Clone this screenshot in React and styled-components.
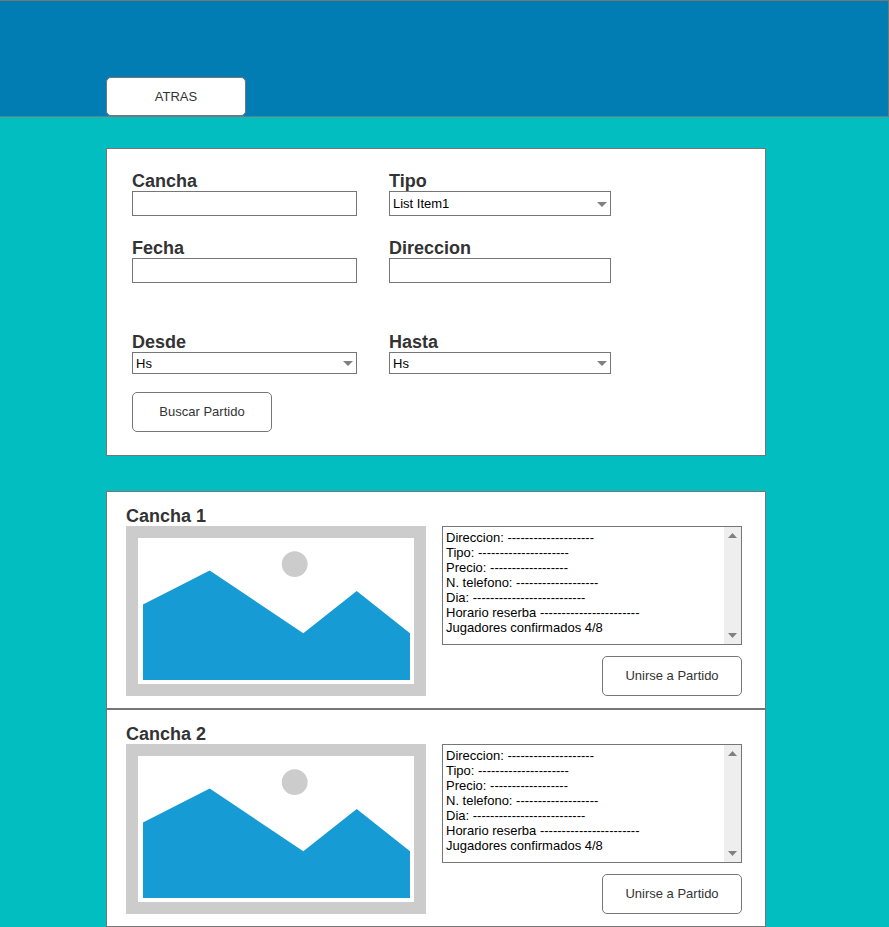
import React from "react";
import styled, { createGlobalStyle } from "styled-components";

const line = "#767678";
const ink = "#333333";

const GlobalStyle = createGlobalStyle`
  *, *::before, *::after { box-sizing: border-box; }
  body {
    margin: 0;
    background: #02bec0;
    color: ${ink};
    font-family: "Liberation Sans", Arial, sans-serif;
    font-size: 13px;
    line-height: 15px;
  }
  button, input, select, textarea { font: inherit; }
`;

const Header = styled.header`
  display: flex;
  align-items: flex-end;
  min-height: 117px;
  padding: 76px 122px 0 106px;
  background: #027db4;
  border: 1px solid ${line};
  border-left: 0;
`;

const Button = styled.button`
  width: 140px;
  height: 40px;
  padding: 0 0 2px;
  color: ${ink};
  background: #ffffff;
  border: 1px solid ${line};
  border-radius: 5px;
  cursor: pointer;
`;

const BackButton = styled(Button)`
  height: 39px;
  padding: 0;
`;

const Main = styled.main`
  display: flex;
  flex-direction: column;
  gap: 35px;
  padding: 31px 123px 0 106px;
`;

const SearchPanel = styled.form`
  padding: 23px 25px;
  background: #ffffff;
  border: 1px solid ${line};
`;

const FieldRow = styled.div`
  display: grid;
  grid-template-columns: minmax(0, 225px) minmax(0, 222px);
  column-gap: 32px;
  margin-bottom: ${(p) => p.$space}px;
`;

const Field = styled.div`
  display: flex;
  flex-direction: column;
`;

const Label = styled.label`
  font-size: 18px;
  font-weight: 700;
  line-height: 19px;
`;

const TextInput = styled.input`
  width: 100%;
  height: 25px;
  padding: 0 3px;
  color: #000000;
  background: #ffffff;
  border: 1px solid ${line};
  border-radius: 0;
`;

const SelectBox = styled.div`
  position: relative;
  height: ${(p) => p.$height}px;
`;

const Select = styled.select`
  appearance: none;
  display: block;
  width: 100%;
  height: 100%;
  padding: 0 20px 0 3px;
  color: #000000;
  background: #ffffff;
  border: 1px solid ${line};
  border-radius: 0;
`;

const SelectArrow = styled.svg`
  position: absolute;
  top: 50%;
  right: 4px;
  margin-top: -2px;
  pointer-events: none;
`;

const Results = styled.section`
  display: flex;
  flex-direction: column;
`;

const Card = styled.article`
  padding: 15px 23px 12px 19px;
  background: #ffffff;
  border: 1px solid ${line};
`;

const CardTitle = styled.h2`
  margin: 0;
  font-size: 18px;
  line-height: 19px;
`;

const CardBody = styled.div`
  display: grid;
  grid-template-columns: minmax(0, 300px) minmax(0, 300px);
  justify-content: space-between;
  column-gap: 16px;
  align-items: start;
`;

const Picture = styled.svg`
  display: block;
  width: 100%;
  height: auto;
`;

const Side = styled.div`
  display: flex;
  flex-direction: column;
  align-items: flex-end;
  gap: 11px;
`;

const DetailsBox = styled.div`
  display: flex;
  width: 100%;
  height: 119px;
  border: 1px solid ${line};
`;

const Details = styled.textarea`
  flex: 1;
  min-width: 0;
  padding: 3px;
  color: #000000;
  background: #ffffff;
  border: 0;
  resize: none;
  overflow: hidden;
  line-height: 15px;
`;

const ScrollTrack = styled.div`
  display: flex;
  flex-direction: column;
  justify-content: space-between;
  width: 17px;
  background: #eeeeee;
`;

const ScrollButton = styled.button`
  display: flex;
  align-items: center;
  justify-content: center;
  width: 17px;
  height: 17px;
  padding: 0;
  background: transparent;
  border: 0;
`;

const Down = () => (
  <svg width="9" height="5" viewBox="0 0 9 5" aria-hidden="true">
    <path d="M0 0H9L4.5 5Z" fill="#808080" />
  </svg>
);

const Up = () => (
  <svg width="9" height="5" viewBox="0 0 9 5" aria-hidden="true">
    <path d="M0 5H9L4.5 0Z" fill="#808080" />
  </svg>
);

function TextField({ id, label }) {
  return (
    <Field>
      <Label htmlFor={id}>{label}</Label>
      <TextInput id={id} type="text" />
    </Field>
  );
}

function SelectField({ id, label, option, height }) {
  return (
    <Field>
      <Label htmlFor={id}>{label}</Label>
      <SelectBox $height={height}>
        <Select id={id}>
          <option>{option}</option>
        </Select>
        <SelectArrow width="10" height="5" viewBox="0 0 10 5" aria-hidden="true">
          <path d="M0 0H10L5 5Z" fill="#808080" />
        </SelectArrow>
      </SelectBox>
    </Field>
  );
}

const dashes = (n) => "-".repeat(n);

const details = [
  `Direccion: ${dashes(20)}`,
  `Tipo: ${dashes(21)}`,
  `Precio: ${dashes(18)}`,
  `N. telefono: ${dashes(19)}`,
  `Dia: ${dashes(26)}`,
  `Horario reserba ${dashes(23)}`,
  "Jugadores confirmados 4/8",
].join("\n");

function MatchCard({ name }) {
  return (
    <Card>
      <CardTitle>{name}</CardTitle>
      <CardBody>
        <Picture viewBox="0 0 300 170" role="img" aria-label={name}>
          <rect width="300" height="170" fill="#cccccc" />
          <rect x="12" y="12" width="276" height="146" fill="#ffffff" />
          <circle cx="168.7" cy="38.2" r="12.9" fill="#cccccc" />
          <path
            d="M17 78.5L83.7 44.5L177.3 107.3L230.7 65L284 107.3V154H17Z"
            fill="#169bd5"
          />
        </Picture>
        <Side>
          <DetailsBox>
            <Details aria-label={`Datos de ${name}`} defaultValue={details} />
            <ScrollTrack>
              <ScrollButton type="button" aria-label="Subir"><Up /></ScrollButton>
              <ScrollButton type="button" aria-label="Bajar"><Down /></ScrollButton>
            </ScrollTrack>
          </DetailsBox>
          <Button type="button">Unirse a Partido</Button>
        </Side>
      </CardBody>
    </Card>
  );
}

export default function App() {
  return (
    <>
      <GlobalStyle />
      <Header>
        <BackButton type="button">ATRAS</BackButton>
      </Header>
      <Main>
        <SearchPanel>
          <FieldRow $space={23}>
            <TextField id="cancha" label="Cancha" />
            <SelectField id="tipo" label="Tipo" option="List Item1" height={25} />
          </FieldRow>
          <FieldRow $space={50}>
            <TextField id="fecha" label="Fecha" />
            <TextField id="direccion" label="Direccion" />
          </FieldRow>
          <FieldRow $space={18}>
            <SelectField id="desde" label="Desde" option="Hs" height={22} />
            <SelectField id="hasta" label="Hasta" option="Hs" height={22} />
          </FieldRow>
          <Button type="button">Buscar Partido</Button>
        </SearchPanel>
        <Results>
          <MatchCard name="Cancha 1" />
          <MatchCard name="Cancha 2" />
        </Results>
      </Main>
    </>
  );
}
